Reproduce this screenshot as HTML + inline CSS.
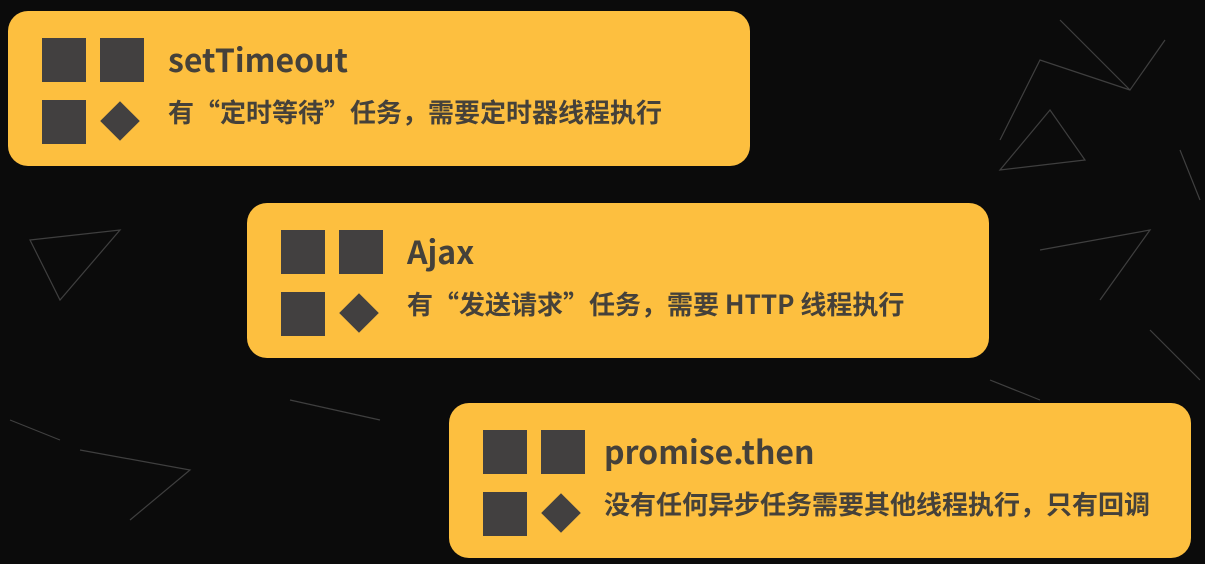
<!DOCTYPE html><html><head><meta charset="utf-8"><style>
body{margin:0;width:1205px;height:564px;background:#0b0b0b;overflow:hidden;position:relative;font-family:"Liberation Sans","Noto Sans CJK SC",sans-serif}
.c{position:absolute;width:742px;height:155px;background:#fdbf3f;border-radius:20px}
.s{position:absolute;width:44px;height:44px;background:#424040}
.d{position:absolute;width:28px;height:28px;background:#424040;transform:rotate(45deg)}
.t{position:absolute;left:160px;top:32px;font-size:32px;line-height:32px;font-weight:bold;color:#45413a;font-family:"Noto Sans CJK SC",sans-serif}
.u{position:absolute;left:160px;top:88px;font-size:26px;line-height:26px;font-weight:bold;color:#45413a;font-family:"Noto Sans CJK SC",sans-serif;white-space:nowrap}
svg{position:absolute;left:0;top:0}
</style></head><body>
<svg width="1205" height="564" stroke="#555" stroke-width="1.2" fill="none" opacity=".7">
<path d="M1060 20L1130 90L1165 40M1000 140L1040 60L1130 90M1050 110L1085 160L1000 170Z"/>
<path d="M30 240L120 230L60 300ZM1040 250L1150 230L1100 300"/>
<path d="M80 450L190 470L130 520M10 420L60 440M1150 330L1200 380M990 380L1040 400"/>
<path d="M290 400L380 420M1180 150L1200 200"/>
</svg>
<div class="c" style="left:8px;top:11px">
<div class="s" style="left:34px;top:27px"></div><div class="s" style="left:92px;top:27px"></div>
<div class="s" style="left:34px;top:89px"></div><div class="d" style="left:98px;top:96px"></div>
<div class="t">setTimeout</div><div class="u">有“定时等待”任务，需要定时器线程执行</div></div>
<div class="c" style="left:247px;top:203px">
<div class="s" style="left:34px;top:27px"></div><div class="s" style="left:92px;top:27px"></div>
<div class="s" style="left:34px;top:89px"></div><div class="d" style="left:98px;top:96px"></div>
<div class="t">Ajax</div><div class="u">有“发送请求”任务，需要 HTTP 线程执行</div></div>
<div class="c" style="left:449px;top:403px">
<div class="s" style="left:34px;top:27px"></div><div class="s" style="left:92px;top:27px"></div>
<div class="s" style="left:34px;top:89px"></div><div class="d" style="left:98px;top:96px"></div>
<div class="t" style="left:155px">promise.then</div><div class="u" style="left:155px">没有任何异步任务需要其他线程执行，只有回调</div></div>
</body></html>
